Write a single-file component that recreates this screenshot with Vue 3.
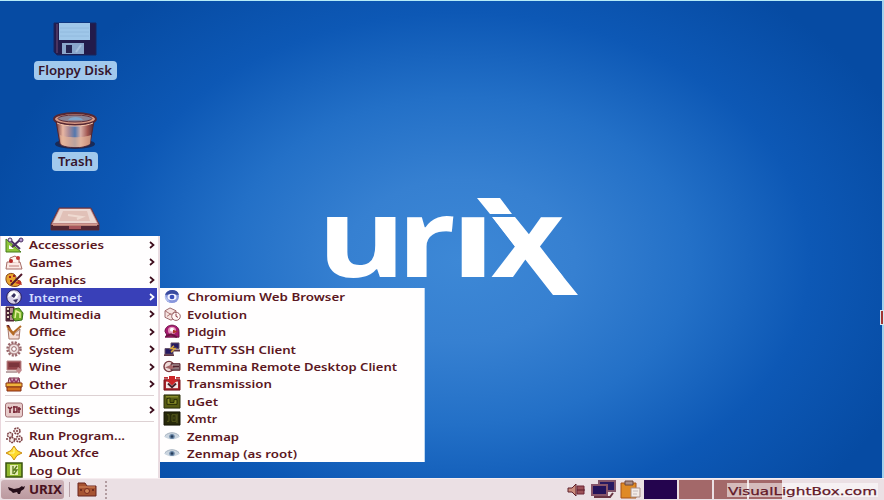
<script setup>
const icons = {
  accessories: '<path d="M1 2v13h15z" fill="#8fc43c" stroke="#477b18"/><path d="M4 8v4h5z" fill="#fff"/><path d="M5 3l10 9M16 2L7 10" stroke="#493060" stroke-width="2"/><circle cx="5" cy="3" r="2" fill="#ddd0ee" stroke="#493060"/><circle cx="16" cy="3" r="2" fill="#b59ad0" stroke="#493060"/>',
  games: '<path d="M2 8h13l2 7H1z" fill="#fbe9e4" stroke="#a66d68"/><path d="M5 8V4l5-2 4 3v4" fill="#fff5ee" stroke="#aa6860"/><circle cx="6" cy="7" r="2" fill="#b62826"/><circle cx="13" cy="4" r="2" fill="#c63835"/><path d="M4 12h10" stroke="#bf817b"/>',
  graphics: '<path d="M2 3c5-4 10 0 9 4l5 3c0 5-9 6-13 2-2-2-3-6-1-9z" fill="#e9a32d" stroke="#874517"/><path d="M4 5h2M5 9h2M8 4h2" stroke="#a21f20" stroke-width="2"/><path d="M17 2L6 13" stroke="#51172a" stroke-width="2"/><path d="M10 11l5-3 2 5z" fill="#be3024"/>',
  internet: '<circle cx="9" cy="8" r="7.3" fill="#d5cde5" stroke="#261b58"/><path d="M5 3l4-1 5 3-2 4-3 1-3-3-3 1z" fill="#fff"/><path d="M9 4l2 2-2 3-3-2zM8 11l5-1-2 4z" fill="#372e5e"/>',
  multimedia: '<path d="M1 1h8v14H1z" fill="#492335" stroke="#5c293b"/><path d="M2 3h2m-2 4h2m-2 4h2" stroke="#e4d4bd" stroke-width="2"/><path d="M5 2h3v5H5zm0 7h3v5H5z" fill="#b58b92"/><path d="M9 3l5-1 4 5-1 7-7 1-3-4z" fill="#73ae27" stroke="#356c18"/><path d="M10 12l1-7 4 2v5" stroke="#e6f19b" stroke-width="1.5" fill="none"/>',
  office: '<path d="M3 5l1 10h10l1-10-6 5z" fill="#f4ded8" stroke="#a7786d"/><path d="M2 2l6 7 8-7M3 4l6 7" fill="none" stroke="#b46a25" stroke-width="2"/><path d="M1 1h3l2 4" fill="#6a2025"/><path d="M11 11h3" stroke="#af706d"/>',
  system: '<circle cx="9" cy="8" r="6.5" fill="#e9d6d5" stroke="#98666a" stroke-width="2.5" stroke-dasharray="2 1.4"/><circle cx="9" cy="8" r="5" fill="#efe2e1" stroke="#a27376"/><circle cx="9" cy="8" r="2.3" fill="#fff" stroke="#98666a"/>',
  wine: '<path d="M2 2h14v9H2z" fill="#914349" stroke="#bd8b8c"/><path d="M4 4h10v4H4z" fill="#7b353c"/><path d="M1 12h11v2H1z" fill="#bda7a9"/><path d="M13 8l4 3-3 4-3-3z" fill="#c1878c"/>',
  other: '<path d="M3 7l1-5h10l1 5z" fill="#d9b6c1" stroke="#752e45"/><path d="M5 2l2 5 2-4 2 4 3-5" fill="none" stroke="#943a65" stroke-width="1.5"/><path d="M1 7h16v4H1z" fill="#f0b43c" stroke="#8a3413"/><path d="M2 11h14v4H2z" fill="#d4721f" stroke="#852c12"/>',
  settings: '<rect x=".5" y="1" width="17" height="14" rx="2" fill="#e7cbca" stroke="#a37075"/><path d="M3 5l2 2 2-2m-2 2v4M9 4v7m-1-6h4v5H8M14 5v6m-1-4h3" stroke="#762533" stroke-width="1.5" fill="none"/>',
  run: '<g fill="#f5e9e7" stroke="#7c4145" stroke-dasharray="2 .7" stroke-width="1.5"><circle cx="12" cy="4" r="3"/><circle cx="5" cy="8" r="2.5"/><circle cx="14" cy="12" r="3"/><circle cx="7" cy="13" r="2.5"/></g><g fill="#7c4145"><circle cx="12" cy="4" r="1"/><circle cx="14" cy="12" r="1"/><circle cx="2" cy="12" r="1"/></g>',
  about: '<path d="M9 1l3 4.5L17 8l-5 2.5L9 15l-3-4.5L1 8l5-2.5z" fill="#ffda28" stroke="#c98b12"/><path d="M9 3v5H4" fill="none" stroke="#fff7a4"/>',
  logout: '<path d="M1 1h16v14H1z" fill="#91b82d" stroke="#39530e" stroke-width="1.5"/><path d="M5 3h8v10H5z" fill="#e5edb5"/><path d="M8 4v8m4-8l-3 4h3l-3 4" fill="none" stroke="#55771a" stroke-width="1.3"/>',
  chromium: '<circle cx="9" cy="8" r="7" fill="#8796dc"/><path d="M2 6c2-6 12-7 14 0H9z" fill="#394a9e"/><path d="M2 7l5 7c-4-1-6-4-5-7z" fill="#b6c3ef"/><ellipse cx="9" cy="8.5" rx="4.5" ry="3.5" fill="#f2f2ff"/><circle cx="9" cy="8.5" r="2.4" fill="#394eb8"/>',
  evolution: '<path d="M2 4l5-3 6 3v7l-5 3-6-3z" fill="#f6e4e1" stroke="#9a6669"/><path d="M2 4l6 4 5-4M4 10l4-3" fill="none" stroke="#a97170"/><circle cx="13" cy="10" r="4.3" fill="#fff8f6" stroke="#945d62"/><path d="M13 7v3l2 1" fill="none" stroke="#8a363e"/>',
  pidgin: '<path d="M2 8c0-9 14-9 14 0v6H2l2-2z" fill="#a71970" stroke="#6d0d43"/><circle cx="9" cy="7" r="4" fill="#e398bb"/><circle cx="9" cy="6" r="2" fill="#fff"/><path d="M10 6l5 2-5 2z" fill="#ad3529"/><path d="M3 13l5-2 6 3" fill="none" stroke="#69133e" stroke-width="2"/>',
  putty: '<path d="M8 1h8v6H8zM2 7h8v6H2z" fill="#251a61" stroke="#655066"/><path d="M8 8h9v2H8zM1 13h10v2H1z" fill="#613845"/><path d="M11 4L8 7h4l-4 4" fill="none" stroke="#d9a83a" stroke-width="1.5"/>',
  remmina: '<ellipse cx="6" cy="8" rx="5" ry="5.5" fill="#eedbd8" stroke="#7a3c42" stroke-width="1.5"/><path d="M8 5h9v7H8z" fill="#75636b" stroke="#612833"/><path d="M9 6h7v4H9z" fill="#bda1a2"/><path d="M2 9l6-3 4 3-4 2z" fill="#a7676a"/><path d="M10 8h6" stroke="#51232e" stroke-width="2"/>',
  transmission: '<path d="M1 4h16v11H1z" fill="#a5222a" stroke="#76131a"/><path d="M3 6h12v7H3z" fill="#f3e9e8"/><path d="M6 0h6v4h3l-6 6-6-6h3z" fill="#cd2528"/><path d="M5 8l4 4 4-4" stroke="#481e28" stroke-width="2" fill="none"/><path d="M1 2h4m8 0h4" stroke="#bd3034" stroke-width="2"/>',
  uget: '<path d="M1 1h16v14H1z" fill="#565b12" stroke="#292d09"/><path d="M4 5v6h10V6h-3v3H7V4z" fill="#888d27" stroke="#252906"/><path d="M3 3h12" stroke="#a2a63a"/>',
  xmtr: '<path d="M1 1h16v14H1z" fill="#27290a" stroke="#151505"/><path d="M4 4h2v7H4m5-7v7h4V4zm2 2v3" fill="none" stroke="#585b1c"/><path d="M14 3v10" stroke="#626326"/>',
  zenmap: '<path d="M1 8c4-5 12-5 16 0-4 4-12 4-16 0z" fill="#cbd5df"/><path d="M2 7c4-4 10-4 14 0" fill="none" stroke="#9ba9b8"/><circle cx="9" cy="8" r="2.7" fill="#6683a3"/><circle cx="9" cy="8" r="1.3" fill="#273c59"/>'
}
const menu = [
  { t: 'Accessories', w: 75, i: 'accessories', sub: true },
  { t: 'Games', w: 43, i: 'games', sub: true },
  { t: 'Graphics', w: 57, i: 'graphics', sub: true },
  { t: 'Internet', w: 53, i: 'internet', sub: true, active: true },
  { t: 'Multimedia', w: 72, i: 'multimedia', sub: true },
  { t: 'Office', w: 37, i: 'office', sub: true },
  { t: 'System', w: 45, i: 'system', sub: true },
  { t: 'Wine', w: 32, i: 'wine', sub: true },
  { t: 'Other', w: 38, i: 'other', sub: true },
  { line: true },
  { t: 'Settings', w: 51, i: 'settings', sub: true },
  { line: true },
  { t: 'Run Program...', w: 96, i: 'run' },
  { t: 'About Xfce', w: 70, i: 'about' },
  { t: 'Log Out', w: 52, i: 'logout' }
]
const programs = [
  { t: 'Chromium Web Browser', w: 158, i: 'chromium' },
  { t: 'Evolution', w: 60, i: 'evolution' },
  { t: 'Pidgin', w: 39, i: 'pidgin' },
  { t: 'PuTTY SSH Client', w: 109, i: 'putty' },
  { t: 'Remmina Remote Desktop Client', w: 210, i: 'remmina' },
  { t: 'Transmission', w: 85, i: 'transmission' },
  { t: 'uGet', w: 31, i: 'uget' },
  { t: 'Xmtr', w: 30, i: 'xmtr' },
  { t: 'Zenmap', w: 52, i: 'zenmap' },
  { t: 'Zenmap (as root)', w: 110, i: 'zenmap' }
]
</script>

<template>
  <div class="screen">
    <main class="desktop">
      <div class="shortcuts">
        <div class="shortcut">
          <svg class="floppy" width="46" height="36" viewBox="0 0 46 36">
            <path d="M2 2h42v32H5l-3-3z" fill="#231b4b" stroke="#18265f" />
            <path d="M5 3v29" stroke="#493460" stroke-width="2" />
            <path d="M7 2h31v17H7z" fill="#9fc7e9" />
            <path d="M8 7h29M8 11h29M8 15h29" stroke="#92bade" />
            <path d="M10 22h22v11H10z" fill="#8ba7cb" /><path d="M14 24h6v8h-6z" fill="#252450" />
            <path d="M24 31l5-7" stroke="#a9c2dd" stroke-width="2" />
          </svg>
          <div class="tag"><svg width="74" height="16"><text x="0" y="12" textLength="74" lengthAdjust="spacingAndGlyphs">Floppy Disk</text></svg></div>
        </div>
        <div class="shortcut trash">
          <svg width="46" height="39" viewBox="0 0 46 39">
            <defs><linearGradient id="metal"><stop stop-color="#6a3034" /><stop offset=".18" stop-color="#eab7a2" /><stop offset=".34" stop-color="#a98a96" /><stop offset=".5" stop-color="#5277ae" /><stop offset=".65" stop-color="#d9b0a8" /><stop offset=".83" stop-color="#a15650" /><stop offset="1" stop-color="#48232e" /></linearGradient></defs>
            <ellipse cx="23" cy="33" rx="20" ry="5" fill="#182a58" />
            <path d="M4 10l4 23c5 5 25 5 30 0l4-23z" fill="url(#metal)" stroke="#512532" />
            <path d="M8 24c6 3 24 3 31 0l-1 9c-6 4-23 4-29 0z" fill="#e6b598" opacity=".7" />
            <ellipse cx="23" cy="8" rx="21" ry="6" fill="#d79a86" stroke="#572833" stroke-width="2" />
            <ellipse cx="23" cy="7.5" rx="17" ry="3.5" fill="#8a8495" stroke="#61303a" />
            <path d="M16 9c2-4 13-4 15 0z" fill="#7fa6cb" /><path d="M5 12c8 4 28 4 36 0" fill="none" stroke="#f6c6ac" />
          </svg>
          <div class="tag small"><svg width="35" height="16"><text x="0" y="12" textLength="35" lengthAdjust="spacingAndGlyphs">Trash</text></svg></div>
        </div>
        <svg class="drive" width="50" height="24" viewBox="0 0 50 24">
          <path d="M9 1h32l8 16v6H1v-6z" fill="#bd8583" stroke="#65313c" />
          <path d="M10 2h30l7 14H3z" fill="#ecd8d2" /><path d="M13 4h24l3 10H9z" fill="#e1c1b8" />
          <path d="M18 8l14 2-5 2" fill="none" stroke="#efdad1" stroke-width="2" />
          <path d="M1 18h48v5H1z" fill="#512632" /><path d="M3 18h44" stroke="#dda091" stroke-width="1.5" /><path d="M19 19h12v3H19z" fill="#a7555a" />
        </svg>
      </div>
      <svg class="brand" width="260" height="110" viewBox="0 0 260 110">
        <g transform="translate(0 87)">
          <text x="-3" y="0" textLength="89" lengthAdjust="spacingAndGlyphs">u</text>
          <text x="77" y="0" textLength="59" lengthAdjust="spacingAndGlyphs">r</text>
          <text x="130" y="0" textLength="46" lengthAdjust="spacingAndGlyphs">ı</text>
          <text x="171" y="0" textLength="73" lengthAdjust="spacingAndGlyphs">x</text>
        </g>
        <path d="M157 8h23l12 16h-22zM172 27h23l63 78h-25z" />
      </svg>
    </main>

    <footer class="taskbar">
      <div class="start">
        <svg width="18" height="14" viewBox="0 0 18 14"><path d="M0 4l6 2 5-1 3-2 1 1 2-1-1 3-3 2-1 3h-2l-1-2-4 1-2-2-2-1z" fill="#260e19" /></svg>
        <svg class="start-label" width="33" height="16"><text y="12" textLength="33" lengthAdjust="spacingAndGlyphs">URIX</text></svg>
      </div>
      <div class="divider"></div>
      <svg class="folder" width="20" height="15" viewBox="0 0 20 15"><path d="M1 1h7l2 3h9v10H1z" fill="#a65331" stroke="#69251e" /><path d="M2 5h16" stroke="#d88b60" /><circle cx="10" cy="9" r="2.5" fill="#cf855a" stroke="#782b20" /><circle cx="4" cy="8" r="1" fill="#602018" /><circle cx="16" cy="8" r="1" fill="#602018" /></svg>
      <div class="grip"></div>
      <svg class="tray" width="76" height="20" viewBox="0 0 76 20">
        <path d="M1 8h4l4-4v12l-4-4H1z" fill="#cb8b7b" stroke="#5e202d" /><path d="M10 6h7v8h-7z" fill="#9c5057" stroke="#6c2737" /><path d="M10 10h8" stroke="#5c1d2b" />
        <path d="M32 1h16v10H32z" fill="#271a61" stroke="#82566b" stroke-width="2" /><path d="M25 5h15v10H25z" fill="#24135a" stroke="#87556a" stroke-width="2" /><path d="M27 17h16l3-4" fill="none" stroke="#693544" stroke-width="2" />
        <path d="M54 3h15v15H54z" fill="#df8a25" stroke="#a75318" /><path d="M58 1h8v4h-8z" fill="#a98d88" stroke="#684740" /><path d="M64 8h9v9h-9z" fill="#f3ebe6" stroke="#a88f89" /><path d="M66 11h5m-5 3h4" stroke="#c4babd" />
      </svg>
      <div class="pager"><i class="current"></i><i></i><i></i><i class="last"></i></div>
      <div class="credit"><svg width="149" height="15"><text x="1" y="12" textLength="149" lengthAdjust="spacingAndGlyphs">VisualLightBox.com</text></svg></div>
    </footer>

    <nav class="menu">
      <template v-for="(item, index) in menu" :key="index">
        <div v-if="item.line" class="separator"></div>
        <div v-else class="row" :class="{ active: item.active }">
          <svg class="icon" width="18" height="16" viewBox="0 0 18 16" preserveAspectRatio="none" v-html="icons[item.i]"></svg>
          <svg class="label" :width="item.w" height="17"><text y="12.5" :textLength="item.w" lengthAdjust="spacingAndGlyphs">{{ item.t }}</text></svg>
          <svg v-if="item.sub" class="arrow" width="6" height="8" viewBox="0 0 6 8"><path d="M1 1l3.5 3L1 7" /></svg>
        </div>
      </template>
    </nav>
    <nav class="menu submenu">
      <div v-for="item in programs" :key="item.t" class="row">
        <svg class="icon" width="18" height="15" viewBox="0 0 18 16" preserveAspectRatio="none" v-html="icons[item.i]"></svg>
        <svg class="label" :width="item.w" height="17"><text y="12.5" :textLength="item.w" lengthAdjust="spacingAndGlyphs">{{ item.t }}</text></svg>
      </div>
    </nav>
    <div class="edge-handle"></div>
  </div>
</template>

<style>
body { margin: 0; overflow: hidden; }
</style>
<style scoped>
* { box-sizing: border-box; }
.screen { position: relative; width: 884px; height: 500px; display: flex; flex-direction: column; overflow: hidden; font-family: "Noto Sans", "Open Sans", sans-serif; }
svg { display: block; flex: none; overflow: visible; }
text { font: 600 11.4px "Noto Sans", "Open Sans", sans-serif; fill: #5b1722; }
.desktop { height: 478px; display: flex; border-top: 1px solid #b5ebf8; border-right: 2px solid #a1d3ef; background: radial-gradient(ellipse 480px 340px at 460px 260px, #3d88d6 0%, #3680d1 24%, #2370c7 48%, #0d58b5 73%, #064ba3 100%); }
.shortcuts { width: 150px; padding-top: 20px; display: flex; flex-direction: column; align-items: center; }
.shortcut { display: flex; flex-direction: column; align-items: center; }
.tag { display: flex; justify-content: center; align-items: center; width: 83px; height: 19px; margin-top: 4px; border-radius: 4px; background: #a1c9ed; }
.tag text { font-size: 12px; fill: #35152c; }
.trash { margin-top: 31px; }
.tag.small { width: 46px; margin-top: 2px; }
.drive { margin-top: 36px; }
.brand { margin: 189px 0 0 170px; }
.brand text { font: 700 109px "Open Sans", sans-serif; fill: #fff; }
.brand path { fill: #fff; }
.menu { position: absolute; left: 0; top: 236px; width: 160px; height: 242px; background: #fffefe; border-left: 1px solid #ead7dd; border-right: 2px solid #eadde2; }
.row { display: flex; align-items: center; height: 17.45px; padding-left: 4px; margin-right: 1px; }
.icon { margin-right: 6px; }
.arrow { margin: 0 2px 0 auto; }
.arrow path { fill: none; stroke: #3d0c1c; stroke-width: 1.7; }
.active { background: #3940b8; }
.active text { fill: #d3dcff; }
.active .arrow path { stroke: #fff; }
.separator { height: 8.2px; padding-top: 2.5px; }
.separator::after { content: ""; display: block; margin: 0 4px; height: 1px; background: #ddd1d3; }
.submenu { left: 159px; top: 288px; width: 266px; height: 174px; border-right: 1px solid #bcd7f2; padding-top: 0; }
.submenu .row { padding-left: 3px; }
.taskbar { position: relative; display: flex; align-items: center; height: 22px; background: #ebe0e4; border-top: 1px solid #f7edf0; }
.start { display: flex; align-items: center; width: 63px; height: 19px; margin-left: 1px; padding-left: 7px; border-radius: 3px; background: linear-gradient(#ceb3b8, #bb999f); }
.start-label { margin-left: 3px; }
.start text { font-size: 12px; font-weight: 700; fill: #4a121f; }
.divider { width: 1px; height: 15px; margin-left: 5px; background: #b8a0a7; }
.folder { margin-left: 7px; }
.grip { width: 2px; height: 18px; margin-left: 8px; background: repeating-linear-gradient(#b29ca0 0 2px, transparent 2px 4px); }
.tray { margin-left: 460px; }
.pager { display: flex; margin-left: 1px; height: 19px; gap: 2px; }
.pager i { width: 33px; background: #a36869; }
.pager .current { background: #24044e; }
.credit { position: absolute; left: 727px; top: 4px; width: 151px; height: 14px; background: rgba(255, 255, 255, .55); }
.credit text { font: 400 11px "DejaVu Sans", sans-serif; fill: #611727; stroke: #611727; stroke-width: .25px; }
.edge-handle { position: absolute; right: 0; top: 310px; width: 4px; height: 15px; border: 1px solid #d8e6ef; background: #a33532; }
</style>
